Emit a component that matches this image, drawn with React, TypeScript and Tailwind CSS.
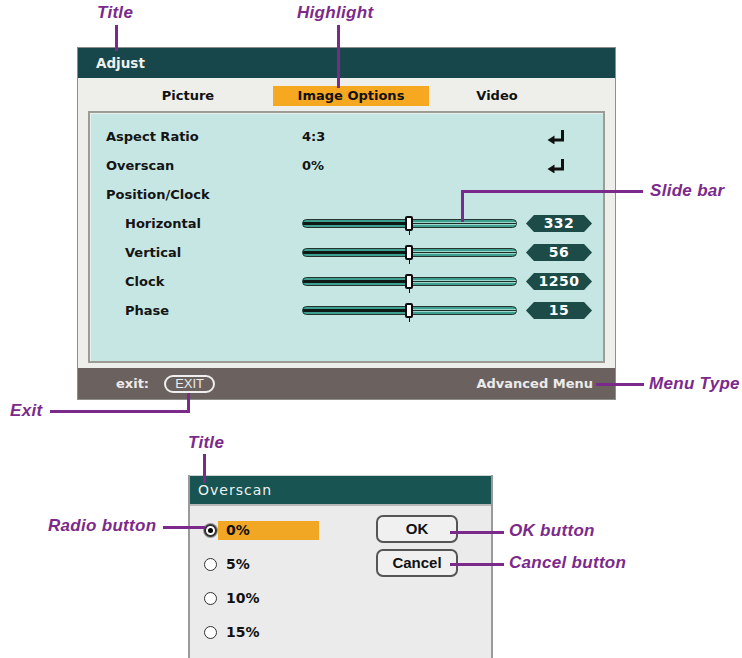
import React from "react"

const osd = "font-['DejaVu_Sans',sans-serif]"
const note = "font-['Liberation_Sans',Arial,sans-serif] font-bold italic text-[17px] text-[#7b2a8c] tracking-[0.3px]"

type Row = {
    label: string
    indent?: boolean
    value?: string
    enter?: boolean
    slider?: string
}

const rows: Row[] = [
    { label: "Aspect Ratio", value: "4:3", enter: true },
    { label: "Overscan", value: "0%", enter: true },
    { label: "Position/Clock" },
    { label: "Horizontal", indent: true, slider: "332" },
    { label: "Vertical", indent: true, slider: "56" },
    { label: "Clock", indent: true, slider: "1250" },
    { label: "Phase", indent: true, slider: "15" },
]

function EnterIcon() {
    return (
        <svg width="18" height="14" viewBox="0 0 18 14">
            <path d="M15.5 0V10H6" stroke="#111" strokeWidth="3" fill="none" />
            <path d="M0.5 10L7.5 5.5V14.5Z" fill="#111" />
        </svg>
    )
}

function Slider({ value }: { value: string }) {
    return (
        <div className="flex items-center">
            <div className="relative w-[215px] h-[16px] flex items-center">
                <div className="w-full h-[9px] rounded-full border border-[#26332f] bg-[#3d9f90] flex items-center overflow-hidden">
                    <div className="w-1/2 h-[3px] bg-[#101816]" />
                    <div className="w-1/2 h-[3px] bg-[#9fd6cc] flex items-center">
                        <div className="w-full h-[1px] bg-[#1c2b28]" />
                    </div>
                </div>
                {/* thumb */}
                <div className="absolute left-[103px] top-0 w-[8px] h-[15px] bg-white border-2 border-[#0c0c0c] rounded-[2px]" />
                <div className="absolute left-[107px] top-[15px] w-[1px] h-[4px] bg-[#0c0c0c]" />
            </div>
            <div className="ml-[9px] w-[66px] h-[17px] bg-[#1d4b48] [clip-path:polygon(12%_0,88%_0,100%_50%,88%_100%,12%_100%,0_50%)] flex items-center justify-center text-white font-bold text-[14px] tracking-[0.5px]">
                {value}
            </div>
        </div>
    )
}

export default function App() {
    return (
        <div className={`relative w-[742px] h-[658px] bg-white overflow-hidden ${osd}`}>
            {/* Adjust window */}
            <div className="ml-[77px] mt-[47px] w-[539px] border border-[#8e8e8a] flex flex-col">
                <div className="h-[30px] bg-[#17474a] pl-[18px] flex items-center text-[#eef0ee] font-bold text-[13.5px]">
                    Adjust
                </div>
                <div className="bg-[#eeefeb] px-[10px] pb-[5px]">
                    <div className="h-[33px] pt-[8px] flex text-[13px] font-bold text-[#111]">
                        <div className="ml-[22px] w-[156px] h-[20px] flex items-center justify-center">Picture</div>
                        <div className="ml-[7px] w-[156px] h-[20px] bg-[#f5a820] flex items-center justify-center">Image Options</div>
                        <div className="w-[136px] h-[20px] flex items-center justify-center">Video</div>
                    </div>
                    <div className="h-[252px] border-2 border-[#9d9b95] bg-[#c6e6e3] pt-[9px] pl-[16px] shadow-[inset_1px_1px_0_#e9efeb]">
                        {rows.map((r) => (
                            <div key={r.label} className="h-[29px] flex items-center text-[13px] font-bold text-[#141414]">
                                <div className={`w-[196px] ${r.indent ? "pl-[19px]" : ""}`}>{r.label}</div>
                                {r.value && <div className="w-[245px]">{r.value}</div>}
                                {r.enter && <EnterIcon />}
                                {r.slider && <Slider value={r.slider} />}
                            </div>
                        ))}
                    </div>
                </div>
                <div className="h-[31px] bg-[#6b615e] flex items-center pl-[38px] pr-[22px] text-[#ebebeb] text-[13px]">
                    <span className="font-bold">exit:</span>
                    <span className="ml-[15px] w-[51px] h-[18px] border-2 border-[#efefef] rounded-full flex items-center justify-center font-['Liberation_Sans',Arial,sans-serif] text-[13px]">
                        EXIT
                    </span>
                    <span className="ml-auto font-bold">Advanced Menu</span>
                </div>
            </div>

            {/* Overscan dialog */}
            <div className="ml-[188px] mt-[75px] w-[305px] border-x-2 border-[#9a9a9a]">
                <div className="h-[29px] bg-[#175452] border-t border-[#c8d4d2] pl-[8px] flex items-center text-[#eef2f0] text-[14px] tracking-[1px]">
                    Overscan
                </div>
                <div className="h-[160px] bg-[#ebebeb] border-t-2 border-[#b8b8b8] flex">
                    <div className="pt-[7px] pl-[14px]">
                        {["0%", "5%", "10%", "15%"].map((v, i) => (
                            <div key={v} className="h-[34px] flex items-center">
                                <div
                                    className={`w-[13px] h-[13px] rounded-full bg-white flex items-center justify-center ${
                                        i === 0 ? "border-2 border-[#333] shadow-[0_0_0_1px_#999]" : "border border-[#333]"
                                    }`}
                                >
                                    {i === 0 && <div className="w-[5px] h-[5px] rounded-full bg-black" />}
                                </div>
                                <div
                                    className={`ml-[1px] w-[101px] h-[19px] pl-[8px] flex items-center font-bold text-[14px] text-[#111] ${
                                        i === 0 ? "bg-[#f2a724]" : ""
                                    }`}
                                >
                                    {v}
                                </div>
                            </div>
                        ))}
                    </div>
                    <div className="ml-[57px] pt-[9px] flex flex-col gap-[6px] font-['Liberation_Sans',Arial,sans-serif] font-bold text-[15px] text-[#111]">
                        <div className="w-[82px] h-[28px] border-2 border-[#555] rounded-[7px] bg-[#f0f0f0] flex items-center justify-center">OK</div>
                        <div className="w-[82px] h-[28px] border-2 border-[#555] rounded-[7px] bg-[#f0f0f0] flex items-center justify-center">Cancel</div>
                    </div>
                </div>
            </div>

            {/* Callouts */}
            <div className={`absolute left-[97px] top-[3px] h-[20px] flex items-center ${note}`}>Title</div>
            <div className="absolute left-[115px] top-[25px] w-[3px] h-[26px] bg-[#7b2a8c]" />

            <div className={`absolute left-[297px] top-[3px] h-[20px] flex items-center ${note}`}>Highlight</div>
            <div className="absolute left-[337px] top-[25px] w-[3px] h-[63px] bg-[#7b2a8c]" />

            <div className={`absolute left-[650px] top-[181px] h-[20px] flex items-center ${note}`}>Slide bar</div>
            <div className="absolute left-[461px] top-[190px] w-[182px] h-[3px] bg-[#7b2a8c]" />
            <div className="absolute left-[461px] top-[190px] w-[3px] h-[32px] bg-[#7b2a8c]" />

            <div className={`absolute left-[10px] top-[401px] h-[20px] flex items-center ${note}`}>Exit</div>
            <div className="absolute left-[50px] top-[410px] w-[139px] h-[3px] bg-[#7b2a8c]" />
            <div className="absolute left-[187px] top-[393px] w-[3px] h-[20px] bg-[#7b2a8c]" />

            <div className={`absolute left-[649px] top-[374px] h-[20px] flex items-center ${note}`}>Menu Type</div>
            <div className="absolute left-[596px] top-[383px] w-[48px] h-[3px] bg-[#7b2a8c]" />

            <div className={`absolute left-[188px] top-[433px] h-[20px] flex items-center ${note}`}>Title</div>
            <div className="absolute left-[203px] top-[454px] w-[3px] h-[29px] bg-[#7b2a8c]" />

            <div className={`absolute left-[48px] top-[516px] h-[20px] flex items-center ${note}`}>Radio button</div>
            <div className="absolute left-[163px] top-[526px] w-[42px] h-[3px] bg-[#7b2a8c]" />

            <div className={`absolute left-[509px] top-[521px] h-[20px] flex items-center ${note}`}>OK button</div>
            <div className="absolute left-[450px] top-[531px] w-[54px] h-[3px] bg-[#7b2a8c]" />

            <div className={`absolute left-[509px] top-[553px] h-[20px] flex items-center ${note}`}>Cancel button</div>
            <div className="absolute left-[450px] top-[563px] w-[54px] h-[3px] bg-[#7b2a8c]" />
        </div>
    )
}
